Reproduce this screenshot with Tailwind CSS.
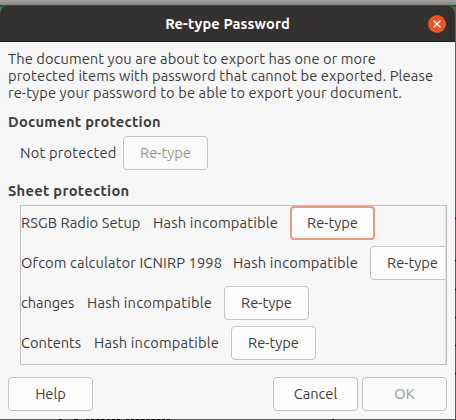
<!DOCTYPE html>
<html lang="en">
<head>
    <meta charset="UTF-8">
    <title>Re-type Password</title>
    <script src="https://cdn.jsdelivr.net/npm/@tailwindcss/browser@4"></script>
</head>
<body class="relative w-[456px] h-[420px] overflow-hidden bg-[#5c5c5c] font-['Ubuntu','Noto_Sans',sans-serif] text-[14.67px] leading-[17px] text-[#3d3d3d]">
<!-- Desktop strip above the dialog, with the window behind it showing at the corners and the right edge -->
<div class="h-[5px] bg-linear-to-b from-[#a3a3a3] to-[#858585]"></div>
<div class="absolute left-0 top-[5px] w-full h-[2px] bg-[#12602a]"></div>
<div class="absolute right-0 top-[218px] w-px h-[43px] bg-[#6b6b00] border-y border-black"></div>
<div class="absolute right-0 top-[289px] w-px h-px bg-black"></div>
<div class="absolute right-0 top-[317px] w-px h-px bg-black"></div>
<div class="absolute right-0 top-[345px] w-px h-px bg-black"></div>
<div class="absolute right-0 top-[373px] w-px h-px bg-black"></div>

<div class="relative w-[455px] h-[414px] flex flex-col rounded-t-lg bg-[#f7f7f7] overflow-hidden" role="dialog" aria-labelledby="dialog-title">
    <!-- Title bar -->
    <div class="h-[37px] shrink-0 grid grid-cols-[1fr_auto_1fr] items-center bg-[#333030] border-t border-t-[#454242] border-b border-b-[#1f1d1d] px-[9px]">
        <h1 id="dialog-title" class="col-start-2 font-bold text-white tracking-[0.1px]">Re-type Password</h1>
        <button class="justify-self-end size-[18px] rounded-full bg-[#e95420] flex items-center justify-center" aria-label="Close">
            <svg class="size-2" viewBox="0 0 8 8" fill="none" stroke="white" stroke-width="1.4">
                <path d="M0.5 0.5L7.5 7.5M7.5 0.5L0.5 7.5"/>
            </svg>
        </button>
    </div>

    <div class="flex-1 flex flex-col px-2 pt-2 pb-2">
        <div class="whitespace-nowrap">
            <p class="tracking-[0.08px]">The document you are about to export has one or more</p>
            <p class="tracking-[0.13px]">protected items with password that cannot be exported. Please</p>
            <p class="tracking-[0.11px]">re-type your password to be able to export your document.</p>
        </div>

        <!-- Document protection -->
        <h2 class="mt-3 font-bold tracking-[0.27px]">Document protection</h2>
        <div class="mt-[6px] pl-3 flex items-center">
            <span class="w-[103px] pb-px whitespace-nowrap tracking-[0.2px]">Not protected</span>
            <button class="w-[85px] h-[34px] pb-px rounded border border-[#c3c3c3] bg-[#fafafa] text-[#979797]" disabled>Re-type</button>
        </div>

        <!-- Sheet protection -->
        <h2 class="mt-3 font-bold tracking-[0.3px]">Sheet protection</h2>
        <div class="mt-[6px] ml-3 w-[427px] h-[160px] shrink-0 border border-[#bfbfbf] overflow-hidden whitespace-nowrap">
            <div class="h-full border-r border-[#dcdcdc] overflow-hidden flex flex-col gap-[6px]">
                <div class="flex items-center shrink-0">
                    <span class="w-[132px] pb-px shrink-0 tracking-[0.07px]">RSGB Radio Setup</span>
                    <span class="w-[137px] pb-px shrink-0 tracking-[0.2px]">Hash incompatible</span>
                    <button class="w-[85px] h-[34px] pb-px shrink-0 rounded border-2 border-[#eb9a7c] bg-[#fdfdfd]">Re-type</button>
                </div>
                <div class="flex items-center shrink-0">
                    <span class="w-[212px] pb-px shrink-0 tracking-[0.13px]">Ofcom calculator ICNIRP 1998</span>
                    <span class="w-[137px] pb-px shrink-0 tracking-[0.2px]">Hash incompatible</span>
                    <button class="w-[85px] h-[34px] pb-px shrink-0 rounded border border-[#c3c3c3] bg-[#fdfdfd]">Re-type</button>
                </div>
                <div class="flex items-center shrink-0">
                    <span class="w-[66px] pb-px shrink-0 tracking-[-0.1px]">changes</span>
                    <span class="w-[137px] pb-px shrink-0 tracking-[0.2px]">Hash incompatible</span>
                    <button class="w-[85px] h-[34px] pb-px shrink-0 rounded border border-[#c3c3c3] bg-[#fdfdfd]">Re-type</button>
                </div>
                <div class="flex items-center shrink-0">
                    <span class="w-[73px] pb-px shrink-0">Contents</span>
                    <span class="w-[137px] pb-px shrink-0 tracking-[0.2px]">Hash incompatible</span>
                    <button class="w-[85px] h-[34px] pb-px shrink-0 rounded border border-[#c3c3c3] bg-[#fdfdfd]">Re-type</button>
                </div>
            </div>
        </div>

        <!-- Actions -->
        <div class="mt-auto flex gap-1">
            <button class="w-[85px] h-[34px] pb-px mr-auto rounded border border-[#c3c3c3] bg-[#fdfdfd]">Help</button>
            <button class="w-[85px] h-[34px] pb-px rounded border border-[#c3c3c3] bg-[#fdfdfd]">Cancel</button>
            <button class="w-[85px] h-[34px] pb-px rounded border border-[#c3c3c3] bg-[#fafafa] text-[#979797]" disabled>OK</button>
        </div>
    </div>
</div>
<!-- Tops of the text of the window behind -->
<div class="flex h-px pl-[59px]">
    <div class="w-[3px] bg-black"></div>
    <div class="ml-3 w-1 bg-black"></div>
    <div class="ml-2 w-[34px] border-t border-dashed border-black"></div>
    <div class="ml-1.5 w-[44px] border-t border-dashed border-black"></div>
    <div class="ml-[162px] w-[2px] bg-black"></div>
</div>
</body>
</html>
